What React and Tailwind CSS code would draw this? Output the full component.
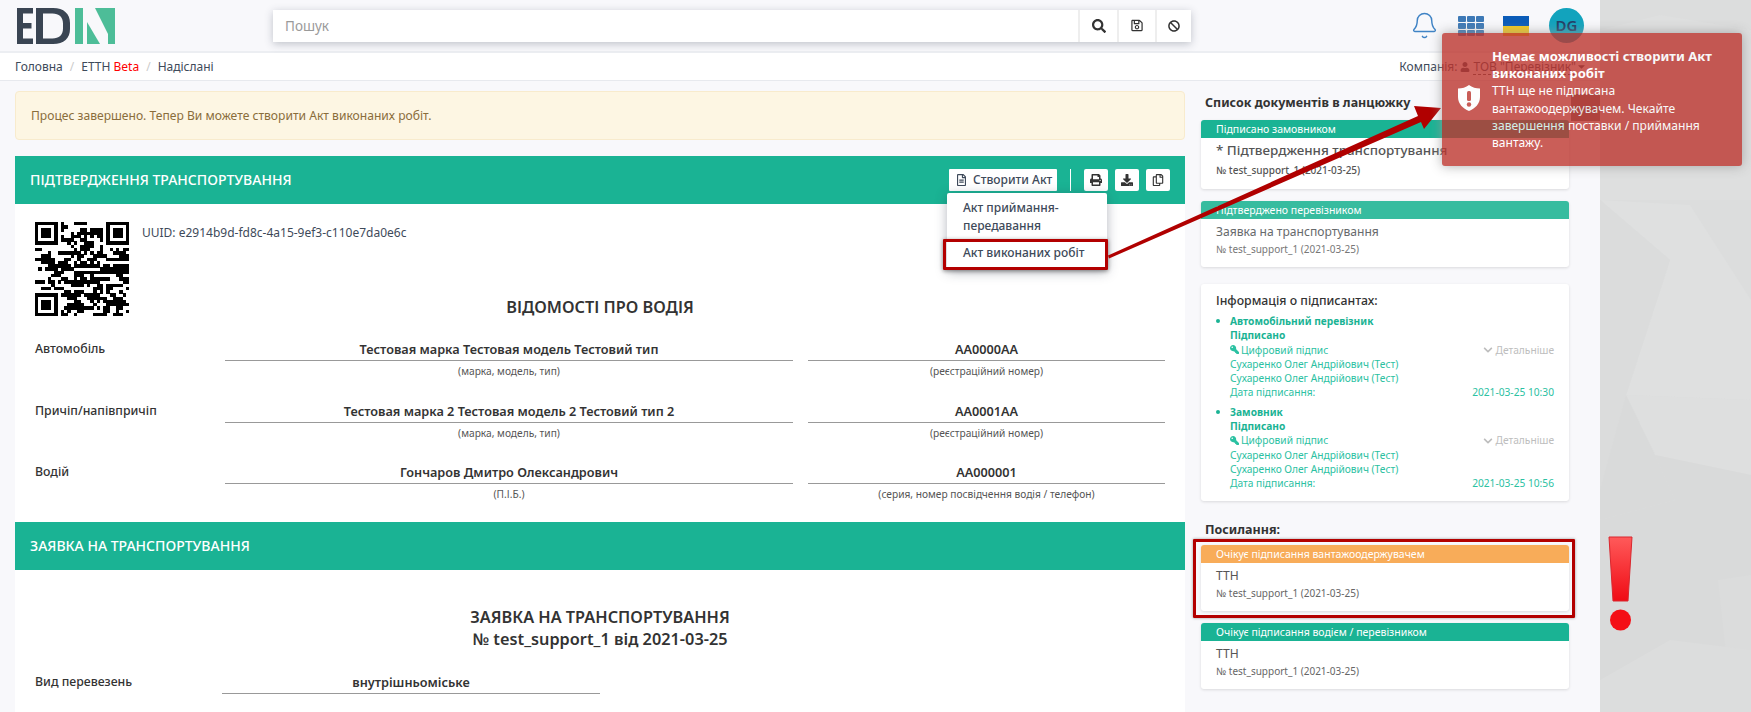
import React from "react";
import { FaSearch, FaRegSave, FaBan, FaRegFileAlt, FaPrint, FaDownload, FaRegCopy, FaKey, FaChevronDown, FaUser, FaCaretDown } from "react-icons/fa";
import { Bell } from "lucide-react";

function Logo() {
  return (
    <svg width="100" height="36" viewBox="0 0 100 36" className="shrink-0">
      <path d="M1 0H17V5.500H7V15H15.500V20.500H7V30.500H17V36H1Z" fill="#3a4553" />
      <path fillRule="evenodd" d="M20 0H37C48 0 54 6 54 15V21C54 30 48 36 37 36H20ZM27 5.500V30.500H36.500C43 30.500 47 27 47 20.500V15.500C47 9 43 5.500 36.500 5.500Z" fill="#3a4553" />
      <rect x="59" y="0" width="8" height="36" fill="#4dbd98" />
      <path d="M71 14L84 36H71Z" fill="#4dbd98" />
      <path d="M79 0H92V26Z" fill="#4dbd98" />
      <rect x="92" y="0" width="7" height="36" fill="#4dbd98" />
    </svg>
  );
}

function QR() {
  const n = 29;
  const s = 94 / n;
  let seed = 20210325;
  const rnd = () => {
    seed = (seed * 1664525 + 1013904223) % 4294967296;
    return seed / 4294967296;
  };
  const cells = [];
  for (let y = 0; y < n; y++) {
    let prev = false;
    for (let x = 0; x < n; x++) {
      const r = rnd();
      const inF = (x < 8 && y < 8) || (x >= n - 8 && y < 8) || (x < 8 && y >= n - 8);
      const on = prev ? r > 0.35 : r > 0.62;
      prev = on;
      if (!inF && on) cells.push([x, y]);
    }
  }
  const finder = (fx, fy, k) => (
    <g key={k}>
      <rect x={fx * s} y={fy * s} width={7 * s} height={7 * s} fill="#000" />
      <rect x={(fx + 1) * s} y={(fy + 1) * s} width={5 * s} height={5 * s} fill="#fff" />
      <rect x={(fx + 2) * s} y={(fy + 2) * s} width={3 * s} height={3 * s} fill="#000" />
    </g>
  );
  return (
    <svg width="94" height="94" viewBox="0 0 94 94" className="shrink-0" shapeRendering="crispEdges">
      {cells.map(([x, y]) => (
        <rect key={x + "-" + y} x={x * s} y={y * s} width={s + 0.2} height={s + 0.2} fill="#000" />
      ))}
      {finder(0, 0, "a")}
      {finder(n - 7, 0, "b")}
      {finder(0, n - 7, "c")}
    </svg>
  );
}

function Row({ label, v1, c1, v2, c2, mb }) {
  return (
    <div className={"flex " + mb}>
      <div className="w-[190px] shrink-0 text-[12.3px] leading-[18px] text-[#333] font-medium">{label}</div>
      <div className="w-[568px] shrink-0">
        <div className="h-[21px] border-b border-[#999] text-center text-[12.7px] leading-[19px] font-semibold text-[#333]">{v1}</div>
        <div className="h-[20px] text-center text-[10.2px] leading-[20px] text-[#555]">{c1}</div>
      </div>
      <div className="w-[357px] ml-[15px] shrink-0">
        <div className="h-[21px] border-b border-[#999] text-center text-[12.7px] leading-[19px] font-semibold text-[#333]">{v2}</div>
        <div className="h-[20px] text-center text-[10.2px] leading-[20px] text-[#555]">{c2}</div>
      </div>
    </div>
  );
}

function DocCard({ status, head, title, sub, h, titleCls, subCls, children }) {
  return (
    <div className={"relative bg-white rounded-[3px] shadow-[0_1px_3px_rgba(0,0,0,0.12)] " + h}>
      <div className={"h-[18px] rounded-t-[3px] pl-[15px] text-[10.5px] leading-[18px] text-white " + head}>{status}</div>
      <div className={"pl-[15px] " + titleCls}>{title}</div>
      <div className={"pl-[15px] " + subCls}>{sub}</div>
      {children}
    </div>
  );
}

function Signer({ name, date }) {
  return (
    <li className="relative pl-[14px] mb-[5px] text-[10.2px] leading-[14.300px] text-[#2bc1a2]">
      <span className="absolute left-0 top-[5px] w-[4px] h-[4px] rounded-full bg-[#1ab394]" />
      <div className="font-bold text-[#1ab394]">{name}</div>
      <div className="font-bold text-[#1ab394]">Підписано</div>
      <div className="flex justify-between items-center">
        <span className="flex items-center gap-[2px]"><FaKey className="w-[9px] h-[9px] -scale-x-100" />Цифровий підпис</span>
        <span className="flex items-center gap-[3px] text-[#bdbdbd]"><FaChevronDown className="w-[10px] h-[10px]" />Детальніше</span>
      </div>
      <div>Сухаренко Олег Андрійович (Тест)</div>
      <div>Сухаренко Олег Андрійович (Тест)</div>
      <div className="flex justify-between"><span>Дата підписання:</span><span>{date}</span></div>
    </li>
  );
}

export default function App() {
  return (
    <div className="relative flex h-[712px] w-[1751px] overflow-hidden font-['Noto_Sans','Open_Sans',sans-serif] text-[13px] text-[#3e4a5a]">
      <div className="w-[1600px] shrink-0 bg-[#f8f8fb]">
        <header className="flex items-center h-[53px] border-b-2 border-[#eceef2] pl-[16px]">
          <Logo />
          <div className="ml-[157px] flex h-[32px] w-[918px] bg-white shadow-[0_2px_8px_rgba(60,70,90,0.3)]">
            <div className="flex-1 pl-[12px] text-[13.5px] leading-[32px] text-[#9a9a9a]">Пошук</div>
            <div className="w-[39px] flex items-center justify-center border-l-2 border-[#eee]"><FaSearch className="w-[14px] h-[14px] text-[#333]" /></div>
            <div className="w-[38px] flex items-center justify-center border-l-2 border-[#eee]"><FaRegSave className="w-[12px] h-[13px] text-[#333]" /></div>
            <div className="w-[36px] flex items-center justify-center border-l-2 border-[#eee]"><FaBan className="w-[12px] h-[12px] text-[#333]" /></div>
          </div>
          <Bell className="ml-[219px] w-[29px] h-[29px] text-[#3f83c5]" strokeWidth={1.2} />
          <div className="ml-[19px] grid grid-cols-3 gap-[1px] w-[26px]">
            {[0, 1, 2, 3, 4, 5, 6, 7, 8].map((i) => (
              <span key={i} className="h-[6px] rounded-[1px] bg-[#3d79b6]" />
            ))}
          </div>
          <div className="ml-[19px] w-[26px] h-[20px] flex flex-col">
            <span className="h-[10px] bg-[#0b5cb8]" />
            <span className="h-[10px] bg-[#f2c81e]" />
          </div>
          <div className="ml-[20px] w-[35px] h-[35px] rounded-full bg-[#12a3bd] flex items-center justify-center text-[15px] font-semibold text-[#233f66]">DG</div>
        </header>
        <div className="flex justify-between items-center h-[28px] bg-white border-b border-[#e7e9ee] pl-[15px] pr-[13px] text-[12px]">
          <div className="flex items-center">
            <span>Головна</span><span className="mx-[7px] text-[#ccc]">/</span>
            <span>ЕТТН <span className="text-[#f00]">Beta</span></span><span className="mx-[7px] text-[#ccc]">/</span>
            <span>Надіслані</span>
          </div>
          <div className="flex items-center">
            <span>Компанія:</span>
            <FaUser className="mx-[3px] w-[10px] h-[10px]" />
            <span className="border-b border-dashed border-[#555] leading-[15px]">ТОВ "Перевізник"</span>
            <FaCaretDown className="w-[11px] h-[11px]" />
          </div>
        </div>
        <main className="flex pl-[15px] h-[631px] overflow-hidden">
          <div className="w-[1170px] shrink-0 pt-[10px]">
            <div className="h-[49px] rounded-[4px] border border-[#f8ebcd] bg-[#fdf6e3] pl-[15px] text-[12.1px] leading-[47px] text-[#8a6d3b]">Процес завершено. Тепер Ви можете створити Акт виконаних робіт.</div>
            <section className="mt-[16px] bg-white h-[560px]">
              <div className="relative flex items-center h-[48px] bg-[#1ab394] pl-[15px] text-[14px] font-medium text-white">
                <span className="-mt-[2px]">ПІДТВЕРДЖЕННЯ ТРАНСПОРТУВАННЯ</span>
                <div className="ml-auto mr-[15px] flex items-center">
                  <div className="flex items-center gap-[6px] w-[108px] h-[22px] pl-[7px] bg-white rounded-[1px] text-[12px] text-[#3e4a5a]"><FaRegFileAlt className="w-[11px] h-[12px]" />Створити Акт</div>
                  <span className="mx-[13px] w-[1px] h-[22px] bg-white" />
                  <div className="flex gap-[7px]">
                    <div className="w-[24px] h-[22px] bg-white rounded-[2px] flex items-center justify-center"><FaPrint className="w-[12px] h-[12px] text-[#333]" /></div>
                    <div className="w-[24px] h-[22px] bg-white rounded-[2px] flex items-center justify-center"><FaDownload className="w-[12px] h-[12px] text-[#333]" /></div>
                    <div className="w-[24px] h-[22px] bg-white rounded-[2px] flex items-center justify-center"><FaRegCopy className="w-[12px] h-[12px] text-[#333]" /></div>
                  </div>
                </div>
                <div className="absolute left-[932px] top-[37px] z-10 w-[160px] bg-white rounded-[2px] shadow-[0_2px_12px_rgba(40,50,70,0.35)] text-[12px] text-[#3e4a5a]">
                  <div className="pl-[16px] pt-[6px] pb-[5px] leading-[17.500px]">Акт приймання-<br />передавання</div>
                  <div className="relative pl-[16px] h-[31px] leading-[28px]">
                    Акт виконаних робіт
                    <span className="absolute -left-[4px] right-[-1px] top-0 bottom-0 border-[3px] border-[#b30000] rounded-[1px] shadow-[0_1px_4px_rgba(0,0,0,0.45)]" />
                  </div>
                </div>
              </div>
              <div className="pl-[20px] pt-[18px]">
                <div className="flex h-[74px] gap-[13px]">
                  <QR />
                  <div className="pt-[1px] text-[12px] leading-[20px] text-[#3e4a5a]">UUID: e2914b9d-fd8c-4a15-9ef3-c110e7da0e6c</div>
                </div>
                <h2 className="-ml-[20px] text-center text-[16.3px] leading-[22px] font-semibold text-[#333] mb-[22px]">ВІДОМОСТІ ПРО ВОДІЯ</h2>
                <Row mb="mb-[21px]" label="Автомобіль" v1="Тестовая марка Тестовая модель Тестовий тип" c1="(марка, модель, тип)" v2="AA0000AA" c2="(реєстраційний номер)" />
                <Row mb="mb-[20px]" label="Причіп/напівпричіп" v1="Тестовая марка 2 Тестовая модель 2 Тестовий тип 2" c1="(марка, модель, тип)" v2="AA0001AA" c2="(реєстраційний номер)" />
                <Row mb="mb-[20px]" label="Водій" v1="Гончаров Дмитро Олександрович" c1="(П.І.Б.)" v2="AA000001" c2="(серия, номер посвідчення водія / телефон)" />
              </div>
              <div className="flex items-center h-[48px] -mt-[2px] bg-[#1ab394] pl-[15px] text-[14px] font-medium text-white"><span className="-mt-[1px]">ЗАЯВКА НА ТРАНСПОРТУВАННЯ</span></div>
              <div className="pl-[20px] pt-[36px]">
                <h2 className="-ml-[20px] text-center text-[16.3px] leading-[22px] font-semibold text-[#333]">ЗАЯВКА НА ТРАНСПОРТУВАННЯ<br />№ test_support_1 від 2021-03-25</h2>
                <div className="flex mt-[23px]">
                  <div className="w-[187px] text-[12.3px] leading-[18px] font-medium text-[#333]">Вид перевезень</div>
                  <div className="w-[378px] h-[21px] border-b border-[#999] text-center text-[12.7px] leading-[19px] font-semibold text-[#333]">внутрішньоміське</div>
                </div>
              </div>
            </section>
          </div>
          <aside className="ml-[16px] w-[368px] shrink-0 pt-[13px]">
            <h3 className="ml-[4px] h-[26px] text-[12.5px] leading-[18px] font-bold text-[#333]">Список документів в ланцюжку</h3>
            <DocCard h="h-[69px]" head="bg-[#1ab394]" status="Підписано замовником" title="* Підтвердження транспортування" titleCls="pt-[3px] text-[13.4px] leading-[19px] font-medium text-[#555]" sub="№ test_support_1 (2021-03-25)" subCls="pt-[2px] text-[10px] leading-[16px] font-medium text-[#555]" />
            <div className="mt-[12px]">
              <DocCard h="h-[66px]" head="bg-[#37bc9f]" status="Підтверджено перевізником" title="Заявка на транспортування" titleCls="pt-[4px] text-[12.1px] leading-[18px] text-[#676a6c]" sub="№ test_support_1 (2021-03-25)" subCls="text-[10px] leading-[16px] text-[#777]" />
            </div>
            <div className="mt-[17px] h-[217px] bg-white rounded-[3px] shadow-[0_1px_3px_rgba(0,0,0,0.12)] pl-[15px] pr-[15px] pt-[8px]">
              <div className="text-[12.3px] leading-[18px] font-medium text-[#333]">Інформація о підписантах:</div>
              <ul className="mt-[4px]">
                <Signer name="Автомобільний перевізник" date="2021-03-25 10:30" />
                <Signer name="Замовник" date="2021-03-25 10:56" />
              </ul>
            </div>
            <h3 className="ml-[4px] mt-[20px] h-[24px] text-[12.5px] leading-[18px] font-bold text-[#333]">Посилання:</h3>
            <DocCard h="h-[66px]" head="bg-[#f8ac59]" status="Очікує підписання вантажоодержувачем" title="ТТН" titleCls="pt-[4px] text-[12.1px] leading-[18px] text-[#555]" sub="№ test_support_1 (2021-03-25)" subCls="text-[10px] leading-[16px] text-[#666]">
              <span className="absolute -left-[8px] -right-[6px] -top-[6px] -bottom-[7px] border-[3px] border-[#b30000] rounded-[1px] shadow-[0_0_3px_rgba(0,0,0,0.4)]" />
            </DocCard>
            <div className="mt-[12px]">
              <DocCard h="h-[66px]" head="bg-[#1ab394]" status="Очікує підписання водієм / перевізником" title="ТТН" titleCls="pt-[4px] text-[12.1px] leading-[18px] text-[#555]" sub="№ test_support_1 (2021-03-25)" subCls="text-[10px] leading-[16px] text-[#666]" />
            </div>
          </aside>
        </main>
      </div>
      <div className="relative flex-1 bg-[#dcdddd]">
        <svg width="151" height="712" viewBox="0 0 151 712" className="block">
          <polygon points="0,0 151,0 151,30 60,15 0,30" fill="#dcdddd" />
          <polygon points="0,30 60,15 151,30 151,200 0,200" fill="#dedfdf" />
          <polygon points="0,200 90,205 151,300 151,400 26,395 70,260" fill="#dfe0e0" />
          <polygon points="0,200 70,260 26,395 0,490" fill="#dbdcdc" />
          <polygon points="26,395 151,400 151,475 55,455" fill="#dedfdf" />
          <polygon points="26,395 55,455 75,500 0,520 0,490" fill="#d9dada" />
          <polygon points="55,455 151,475 151,712 0,712 0,520 75,500" fill="#d9dada" />
          <polygon points="118,580 151,575 151,650 128,672" fill="#dbdcdc" />
          <polygon points="0,680 70,640 151,650 151,712 0,712" fill="#dcdddd" />
        </svg>
        <svg width="26" height="96" viewBox="0 0 26 96" className="absolute left-[8px] top-[536px]">
          <defs>
            <linearGradient id="ex" x1="0" y1="0" x2="0" y2="1">
              <stop offset="0" stopColor="#ff5a5a" />
              <stop offset="1" stopColor="#f00b14" />
            </linearGradient>
          </defs>
          <path d="M1 1H24L20 65H5Z" fill="url(#ex)" stroke="#d9272e" strokeWidth="1" strokeLinejoin="round" />
          <circle cx="12.500" cy="84" r="10.500" fill="#f40f16" />
        </svg>
      </div>
      <div className="absolute left-[1571px] top-[94px] w-[29px] h-[27px] bg-[#777]" />
      <svg width="1751" height="712" viewBox="0 0 1751 712" className="absolute left-0 top-0 z-20 pointer-events-none">
        <path d="M1108 255.500L1418 116L1414 106L1441 108L1424 129L1421 122L1109 258.500Z" fill="#b00000" />
      </svg>
      <div className="absolute z-30 left-[1442px] top-[33px] flex items-center w-[300px] h-[133px] pl-[16px] pr-[15px] rounded-[3px] bg-[#bd362f] opacity-80 shadow-[0_0_12px_#999] text-[12.100px] leading-[17.300px] text-white">
        <svg width="22" height="26" viewBox="0 0 22 26" className="shrink-0 -mt-[4px]">
          <path d="M11 0C14 2.500 18 3.500 22 3.500V12C22 19 17 23.500 11 26C5 23.500 0 19 0 12V3.500C4 3.500 8 2.500 11 0Z" fill="#fff" />
          <rect x="9" y="6" width="4" height="10" rx="1.500" fill="#bd362f" />
          <circle cx="11" cy="19.500" r="2.200" fill="#bd362f" />
        </svg>
        <div className="ml-[12px]">
          <div className="font-bold text-[13.100px]">Немає можливості створити Акт виконаних робіт</div>
          <div>ТТН ще не підписана вантажоодержувачем. Чекайте завершення поставки / приймання вантажу.</div>
        </div>
      </div>
    </div>
  );
}
